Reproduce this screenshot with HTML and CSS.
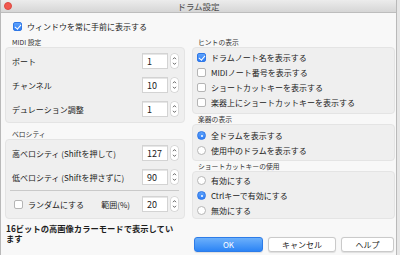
FILE: index.html
```html
<!DOCTYPE html>
<html lang="ja">
<head>
    <meta charset="UTF-8">
    <title>ドラム設定</title>
    <link rel="stylesheet" href="styles.css">
</head>
<body>

<div class="window">
    <div class="titlebar">
        <span class="close"></span>
        ドラム設定
    </div>

    <label class="topcheck">
        <span class="check on"></span>ウィンドウを常に手前に表示する
    </label>

    <div class="columns">
        <!-- Left column -->
        <div class="col-left">
            <div class="group-label">MIDI 設定</div>
            <div class="box midi">
                <div class="row">
                    <span class="row-text">ポート</span>
                    <span class="spin"><span class="num">1</span><span class="stepper"><svg width="7" height="14" viewBox="0 0 7 14"><path d="M2 5.2 L3.5 3.6 L5 5.2 M2 8.8 L3.5 10.4 L5 8.8" fill="none" stroke="#555" stroke-width="0.9"/></svg></span></span>
                </div>
                <div class="row">
                    <span class="row-text">チャンネル</span>
                    <span class="spin"><span class="num">10</span><span class="stepper"><svg width="7" height="14" viewBox="0 0 7 14"><path d="M2 5.2 L3.5 3.6 L5 5.2 M2 8.8 L3.5 10.4 L5 8.8" fill="none" stroke="#555" stroke-width="0.9"/></svg></span></span>
                </div>
                <div class="row">
                    <span class="row-text">デュレーション調整</span>
                    <span class="spin"><span class="num">1</span><span class="stepper"><svg width="7" height="14" viewBox="0 0 7 14"><path d="M2 5.2 L3.5 3.6 L5 5.2 M2 8.8 L3.5 10.4 L5 8.8" fill="none" stroke="#555" stroke-width="0.9"/></svg></span></span>
                </div>
            </div>

            <div class="group-label second">ベロシティ</div>
            <div class="box velocity">
                <div class="row">
                    <span class="row-text">高ベロシティ (Shiftを押して)</span>
                    <span class="spin"><span class="num">127</span><span class="stepper"><svg width="7" height="14" viewBox="0 0 7 14"><path d="M2 5.2 L3.5 3.6 L5 5.2 M2 8.8 L3.5 10.4 L5 8.8" fill="none" stroke="#555" stroke-width="0.9"/></svg></span></span>
                </div>
                <div class="row">
                    <span class="row-text">低ベロシティ (Shiftを押さずに)</span>
                    <span class="spin"><span class="num">90</span><span class="stepper"><svg width="7" height="14" viewBox="0 0 7 14"><path d="M2 5.2 L3.5 3.6 L5 5.2 M2 8.8 L3.5 10.4 L5 8.8" fill="none" stroke="#555" stroke-width="0.9"/></svg></span></span>
                </div>
                <div class="separator"></div>
                <div class="row">
                    <span class="row-text random"><span class="check"></span>ランダムにする</span>
                    <span class="range">範囲(%)</span>
                    <span class="spin"><span class="num">20</span><span class="stepper"><svg width="7" height="14" viewBox="0 0 7 14"><path d="M2 5.2 L3.5 3.6 L5 5.2 M2 8.8 L3.5 10.4 L5 8.8" fill="none" stroke="#555" stroke-width="0.9"/></svg></span></span>
                </div>
            </div>

            <p class="footer-text">16ビットの高画像カラーモードで表示しています</p>
        </div>

        <!-- Right column -->
        <div class="col-right">
            <div class="group-label">ヒントの表示</div>
            <div class="box hints">
                <div class="opt"><span class="check on"></span>ドラムノート名を表示する</div>
                <div class="opt"><span class="check"></span>MIDIノート番号を表示する</div>
                <div class="opt"><span class="check"></span>ショートカットキーを表示する</div>
                <div class="opt"><span class="check"></span>楽器上にショートカットキーを表示する</div>
            </div>

            <div class="group-label tight">楽器の表示</div>
            <div class="box instruments">
                <div class="opt"><span class="radio on"></span>全ドラムを表示する</div>
                <div class="opt"><span class="radio"></span>使用中のドラムを表示する</div>
            </div>

            <div class="group-label tight">ショートカットキーの使用</div>
            <div class="box shortcuts">
                <div class="opt"><span class="radio"></span>有効にする</div>
                <div class="opt"><span class="radio on"></span>Ctrlキーで有効にする</div>
                <div class="opt"><span class="radio"></span>無効にする</div>
            </div>

            <div class="buttons">
                <button class="btn primary">OK</button>
                <button class="btn cancel">キャンセル</button>
                <button class="btn help">ヘルプ</button>
            </div>
        </div>
    </div>
</div>

</body>
</html>
```

FILE: styles.css
```css
/* Base */
* {
    margin: 0;
    padding: 0;
    box-sizing: border-box;
}

body {
    background: #e6e6e6;
    font-family: "Noto Sans CJK JP", "Noto Sans", sans-serif;
    color: #222;
    font-size: 8px;
}

.window {
    width: 397px;
    height: 255px;
    background: #f8f8f8;
    border-left: 1px solid #b9b9b9;
    border-right: 1px solid #b9b9b9;
}

/* Title bar */
.titlebar {
    position: relative;
    height: 13px;
    line-height: 12px;
    text-align: center;
    font-size: 8.5px;
    color: #4a4a4a;
    background: linear-gradient(#ececec, #d6d6d6);
    border-bottom: 1px solid #bdbdbd;
}

.close {
    position: absolute;
    left: 3px;
    top: 2px;
    width: 8px;
    height: 8px;
    border-radius: 50%;
    background: #f2584f;
    border: 1px solid #db4a42;
}

/* Checkboxes and radios */
.check, .radio {
    display: inline-block;
    flex: none;
    width: 9px;
    height: 9px;
    margin-right: 5px;
    background: #fff;
    border: 1px solid #b5b5b5;
    border-radius: 2px;
    position: relative;
}

.radio {
    border-radius: 50%;
}

.check.on, .radio.on {
    background: linear-gradient(#5ea2fb, #2f7ef5);
    border-color: #2f77e6;
}

.check.on::after {
    content: "";
    position: absolute;
    left: 2px;
    top: 0px;
    width: 2.5px;
    height: 5px;
    border: solid #fff;
    border-width: 0 1.3px 1.3px 0;
    transform: rotate(40deg);
}

.radio.on::after {
    content: "";
    position: absolute;
    left: 2.5px;
    top: 2.5px;
    width: 2.5px;
    height: 2.5px;
    border-radius: 50%;
    background: #fff;
}

.topcheck {
    display: flex;
    align-items: center;
    height: 12px;
    margin: 7px 0 0 12px;
}

/* Columns */
.columns {
    display: flex;
    gap: 7px;
    padding-left: 4px;
    margin-top: 5px;
}

.col-left {
    width: 180px;
}

.col-right {
    width: 203px;
}

.group-label {
    height: 10px;
    line-height: 10px;
    font-size: 6.8px;
    color: #333;
    padding-left: 7px;
}

.group-label.second {
    margin-top: 6px;
}

.col-right .group-label {
    padding-left: 6px;
}

.box {
    background: #efefef;
    border: 1px solid #e4e4e4;
    border-radius: 4px;
}

/* Spin rows */
.midi {
    height: 76px;
    padding-top: 1px;
}

.velocity {
    height: 80px;
    padding-top: 1px;
}

.row {
    display: flex;
    align-items: center;
    height: 24px;
    padding: 0 6px 0 6px;
}

.row-text {
    flex: 1;
    font-size: 8px;
}

.random {
    display: flex;
    align-items: center;
    padding-left: 2px;
}

.range {
    margin-right: 12px;
}

.spin {
    display: flex;
    align-items: center;
}

.num {
    width: 26px;
    height: 16px;
    line-height: 15px;
    padding-left: 4px;
    font-size: 9px;
    background: #fff;
    border: 1px solid #d3d3d3;
    box-shadow: inset 0 1px 0 #e6e6e6;
}

.stepper {
    display: flex;
    margin-left: 3px;
    width: 7px;
    height: 14px;
    background: #fff;
    border-radius: 3px;
    box-shadow: 0 0 0 0.5px #c4c4c4;
}

.separator {
    height: 1px;
    background: #c9c9c9;
    margin: 1px 5px 1px 4px;
}

.footer-text {
    width: 172px;
    margin-top: 4px;
    padding-left: 1px;
    font-size: 8.3px;
    font-weight: bold;
    line-height: 10px;
    line-break: anywhere;
    color: #1e1e1e;
}

/* Option lists */
.opt {
    display: flex;
    align-items: center;
    height: 15px;
    padding-left: 4px;
}

.hints {
    height: 67px;
    padding-top: 2px;
}

.instruments {
    height: 37px;
    padding-top: 3px;
}

.shortcuts {
    height: 48px;
    padding-top: 1px;
}

/* Buttons */
.buttons {
    display: flex;
    gap: 5px;
    margin-top: 18px;
    padding-left: 2px;
}

.btn {
    height: 15px;
    font-family: inherit;
    font-size: 8px;
    color: #222;
    background: #fff;
    border: 1px solid #cacaca;
    border-radius: 3px;
    box-shadow: 0 0.5px 1px rgba(0, 0, 0, 0.1);
}

.btn.primary {
    width: 69px;
    color: #fff;
    background: linear-gradient(#6cb0fb, #2c84f5);
    border-color: #2d7ce8;
}

.btn.cancel {
    width: 68px;
}

.btn.help {
    width: 53px;
}
```
